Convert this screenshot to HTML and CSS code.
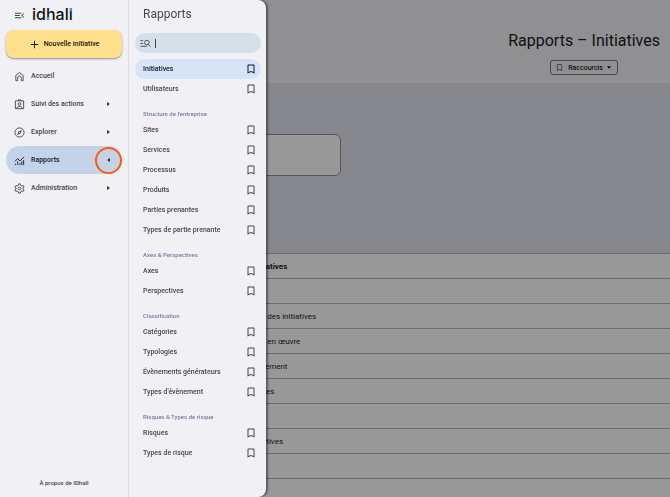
FILE: index.html
```html
<!DOCTYPE html>
<html lang="fr">
<head>
    <meta charset="UTF-8">
    <meta name="viewport" content="width=device-width, initial-scale=1.0">
    <title>Rapports – Initiatives</title>
    <link rel="stylesheet" href="styles.css">
</head>
<body>
    <svg class="sprite" aria-hidden="true">
        <symbol id="bookmark" viewBox="0 0 24 24"><path d="M5 21V5c0-1.100.9-2 2-2h10c1.100 0 2 .9 2 2v16l-7-3zm2-3.050 5-2.150 5 2.150V5H7z"/></symbol>
    </svg>

    <aside class="sidebar">
        <div class="brand">
            <button class="toggle" type="button" aria-label="Réduire le menu">
                <svg class="icon" viewBox="0 0 24 24"><path d="M2 18v-2h14v2zm18.600-1-5-5 5-5L22 8.400 18.400 12l3.600 3.600zM2 13v-2h11v2zm0-5V6h14v2z"/></svg>
            </button>
            <a class="logo" href="#">id<span class="logo-h">h</span>al<span class="logo-l">l</span></a>
        </div>

        <button class="new-btn" type="button">
            <svg class="icon" viewBox="0 0 24 24"><path d="M11 20v-7H4v-2h7V4h2v7h7v2h-7v7z"/></svg>
            Nouvelle initiative
        </button>

        <nav class="nav">
            <a class="nav-item" href="#">
                <svg class="icon" viewBox="0 0 24 24"><path class="line" d="M4 21V9.500L12 3l8 6.500V21h-4v-6a4 4 0 0 0-8 0v6z"/></svg>
                <span>Accueil</span>
            </a>
            <a class="nav-item" href="#">
                <svg class="icon" viewBox="0 0 24 24"><path class="line" d="M3 4h18v17H3zM9 4V2h6v2M6 20c1-5 11-5 12 0"/><circle class="line" cx="12" cy="11" r="3"/></svg>
                <span>Suivi des actions</span>
                <svg class="arrow" viewBox="0 0 4 6"><path d="M0 0l4 3-4 3z"/></svg>
            </a>
            <a class="nav-item" href="#">
                <svg class="icon" viewBox="0 0 24 24"><circle class="line" cx="12" cy="12" r="10"/><path d="M6.500 17.500l3.500-7.500 7.500-3.500-3.500 7.500zM12 13.200a1.200 1.200 0 1 0 0-2.400 1.200 1.200 0 0 0 0 2.400z" fill-rule="evenodd"/></svg>
                <span>Explorer</span>
                <svg class="arrow" viewBox="0 0 4 6"><path d="M0 0l4 3-4 3z"/></svg>
            </a>
            <a class="nav-item active" href="#">
                <svg class="icon" viewBox="0 0 24 24"><path class="line" d="M2 14l6-6 5 5 9-9M3 22v-3M8 22v-8M13 22v-4M17 22v-8M21 22V11"/></svg>
                <span>Rapports</span>
                <svg class="arrow" viewBox="0 0 4 6"><path d="M4 0L0 3l4 3z"/></svg>
                <i class="ring"></i>
            </a>
            <a class="nav-item" href="#">
                <svg class="icon" viewBox="0 0 24 24"><path class="line" d="M10 2h4l.5 3 2.500 1.500 3-1 2 3.500-2.500 2v2l2.500 2-2 3.500-3-1-2.500 1.500-.5 3h-4l-.5-3L7 17.500l-3 1L2 15l2.500-2v-2L2 9l2-3.500 3 1L9.500 5z"/><circle class="line" cx="12" cy="12" r="3"/></svg>
                <span>Administration</span>
                <svg class="arrow" viewBox="0 0 4 6"><path d="M0 0l4 3-4 3z"/></svg>
            </a>
        </nav>

        <a class="about" href="#">À propos de IDhall</a>
    </aside>

    <main class="page">
        <header class="page-header">
            <div class="page-title">
                <h1>Rapports – Initiatives</h1>
                <button class="shortcut" type="button">
                    <svg class="icon"><use href="#bookmark"/></svg>
                    Raccourcis
                    <svg class="caret" viewBox="0 0 6 4"><path d="M0 0h6L3 4z"/></svg>
                </button>
            </div>
        </header>
        <section class="band">
            <div class="card"></div>
        </section>
        <table class="list">
            <thead>
                <tr><th>Initiatives</th></tr>
            </thead>
            <tbody>
                <tr><td></td></tr>
                <tr><td>Nom des initiatives</td></tr>
                <tr><td>Mise en œuvre</td></tr>
                <tr><td>Événement</td></tr>
                <tr><td>Causes</td></tr>
                <tr><td></td></tr>
                <tr><td>Directives</td></tr>
                <tr><td></td></tr>
                <tr><td></td></tr>
            </tbody>
        </table>
    </main>

    <div class="scrim"></div>

    <div class="drawer">
        <h2>Rapports</h2>
        <label class="search">
            <svg class="icon" viewBox="0 0 24 24"><path class="line" d="M1 6h6M1 12h6M1 18h14M18 14l5 5"/><circle class="line" cx="15" cy="10" r="5"/></svg>
            <input type="text" aria-label="Rechercher">
        </label>

        <ul class="links">
            <li class="selected"><a href="#">Initiatives</a><svg class="mark"><use href="#bookmark"/></svg></li>
            <li><a href="#">Utilisateurs</a><svg class="mark"><use href="#bookmark"/></svg></li>
        </ul>

        <h3>Structure de l'entreprise</h3>
        <ul class="links">
            <li><a href="#">Sites</a><svg class="mark"><use href="#bookmark"/></svg></li>
            <li><a href="#">Services</a><svg class="mark"><use href="#bookmark"/></svg></li>
            <li><a href="#">Processus</a><svg class="mark"><use href="#bookmark"/></svg></li>
            <li><a href="#">Produits</a><svg class="mark"><use href="#bookmark"/></svg></li>
            <li><a href="#">Parties prenantes</a><svg class="mark"><use href="#bookmark"/></svg></li>
            <li><a href="#">Types de partie prenante</a><svg class="mark"><use href="#bookmark"/></svg></li>
        </ul>

        <h3>Axes &amp; Perspectives</h3>
        <ul class="links">
            <li><a href="#">Axes</a><svg class="mark"><use href="#bookmark"/></svg></li>
            <li><a href="#">Perspectives</a><svg class="mark"><use href="#bookmark"/></svg></li>
        </ul>

        <h3>Classification</h3>
        <ul class="links">
            <li><a href="#">Catégories</a><svg class="mark"><use href="#bookmark"/></svg></li>
            <li><a href="#">Typologies</a><svg class="mark"><use href="#bookmark"/></svg></li>
            <li><a href="#">Évènements générateurs</a><svg class="mark"><use href="#bookmark"/></svg></li>
            <li><a href="#">Types d'évènement</a><svg class="mark"><use href="#bookmark"/></svg></li>
        </ul>

        <h3>Risques &amp; Types de risque</h3>
        <ul class="links">
            <li><a href="#">Risques</a><svg class="mark"><use href="#bookmark"/></svg></li>
            <li><a href="#">Types de risque</a><svg class="mark"><use href="#bookmark"/></svg></li>
        </ul>
    </div>
</body>
</html>
```
FILE: styles.css
```css
* {
    box-sizing: border-box;
}
body {
    margin: 0;
    display: flex;
    min-height: 100vh;
    font-family: Roboto, Arial, sans-serif;
    font-size: 7px;
    color: #46464c;
    background: #f0f0f5;
    overflow: hidden;
}
a {
    color: inherit;
    text-decoration: none;
}
button {
    font: inherit;
    cursor: pointer;
}
.sprite {
    position: absolute;
    width: 0;
    height: 0;
}
.icon {
    width: 11px;
    height: 11px;
    fill: currentColor;
    flex: none;
}
.line {
    fill: none;
    stroke: currentColor;
    stroke-width: 2;
}

/* sidebar */
.sidebar {
    width: 128px;
    height: 100vh;
    flex: none;
    display: flex;
    flex-direction: column;
    padding: 0 6px 8px;
}
.brand {
    display: flex;
    align-items: center;
    gap: 7px;
    height: 30px;
    padding-left: 8px;
}
.toggle {
    display: flex;
    padding: 0;
    border: 0;
    background: none;
    color: #46464c;
}
.logo {
    padding-bottom: 2px;
    font-family: Inter, sans-serif;
    font-size: 16px;
    font-weight: 500;
    line-height: 16px;
    color: #111;
}
.logo-h,
.logo-l {
    position: relative;
}
/* blue dots on the letters */
.logo-h::after,
.logo-l::after {
    content: "";
    position: absolute;
    left: 1px;
    width: 2px;
    height: 3px;
    background: #2f9bf0;
}
.logo-h::after {
    bottom: 4px;
}
.logo-l::after {
    top: 4px;
}
.new-btn {
    display: flex;
    align-items: center;
    justify-content: center;
    gap: 4px;
    height: 28px;
    padding: 0;
    border: 0;
    border-radius: 8px;
    background: #ffe08d;
    color: #251a00;
    font-weight: 500;
    box-shadow: 0 1px 2px rgba(0, 0, 0, 0.4);
}
.nav {
    display: flex;
    flex-direction: column;
    margin-top: 4px;
}
.nav-item {
    position: relative;
    display: flex;
    align-items: center;
    gap: 6px;
    height: 28px;
    padding: 0 12px 0 8px;
    border-radius: 14px;
    font-weight: 500;
}
.nav-item.active {
    background: #c5d3e8;
    color: #111c2b;
}
.arrow {
    width: 3px;
    height: 4px;
    margin-left: auto;
    fill: #1b1b1f;
}
.ring {
    position: absolute;
    right: 0;
    top: 1px;
    width: 27px;
    height: 27px;
    border: 2px solid #fa5c11;
    border-radius: 50%;
}
.about {
    margin-top: auto;
    text-align: center;
    font-size: 6px;
    font-weight: 500;
    line-height: 12px;
}

/* page */
.page {
    flex: 1;
    color: #1b1b1f;
}
.page-header {
    display: flex;
    justify-content: flex-end;
    height: 83px;
    padding: 30px 10px 0 0;
}
.page-title {
    display: flex;
    flex-direction: column;
    align-items: center;
    gap: 8px;
}
h1 {
    margin: 0;
    font-size: 16px;
    font-weight: 400;
    line-height: 22px;
}
.shortcut {
    display: flex;
    align-items: center;
    gap: 4px;
    height: 15px;
    padding: 0 6px 0 4px;
    border: 1px solid #75777f;
    border-radius: 3px;
    background: none;
    color: #1b1b1f;
    font-weight: 500;
}
.shortcut .icon {
    width: 9px;
    height: 9px;
    color: #2e6496;
}
.caret {
    width: 4px;
    height: 3px;
}
.band {
    height: 170px;
    padding: 51px 12px;
    background: #dfe1ea;
}
.card {
    width: 201px;
    height: 42px;
    border: 1px solid #8f9096;
    border-radius: 6px;
    background: #fdfdff;
}
.list {
    width: 100%;
    border-collapse: collapse;
    background: #fefeff;
    font-size: 8px;
}
.list th,
.list td {
    height: 25px;
    padding: 0 0 0 120px;
    border-top: 1px solid #b4b5bc;
    text-align: left;
}
.list th {
    padding-left: 124px;
}
.scrim {
    position: fixed;
    inset: 0 0 0 128px;
    background: rgba(0, 0, 0, 0.4);
}

/* drawer over the page */
.drawer {
    position: fixed;
    top: 0;
    bottom: 0;
    left: 128px;
    width: 138px;
    padding: 0 5px 0 6px;
    border-left: 1px solid #dcdce2;
    border-radius: 0 8px 8px 0;
    background: #f0f0f5;
    box-shadow: 2px 0 2px rgba(0, 0, 0, 0.4);
}
h2 {
    margin: 0;
    padding: 5px 8px 0;
    font-size: 12px;
    font-weight: 400;
    line-height: 18px;
}
.search {
    display: flex;
    align-items: center;
    gap: 4px;
    height: 20px;
    margin: 10px 0 6px;
    padding: 0 5px;
    border-radius: 10px;
    background: #d5e0ea;
}
.search input {
    flex: 1;
    min-width: 0;
    height: 9px;
    padding: 0 2px;
    border: 0;
    border-left: 1px solid #46464c;
    background: none;
    font: inherit;
    outline: none;
}
h3 {
    margin: 0;
    padding: 9px 8px 0;
    font-size: 6px;
    font-weight: 500;
    line-height: 12px;
    color: #74809a;
}
.links {
    margin: 0;
    padding: 0;
    list-style: none;
}
.links li {
    display: flex;
    align-items: center;
    justify-content: space-between;
    height: 20px;
    padding: 0 4px 0 8px;
    border-radius: 10px;
    font-weight: 500;
}
.links .selected {
    background: #d6e3f8;
    color: #0f1c2e;
}
.mark {
    width: 12px;
    height: 12px;
    fill: currentColor;
}
```
